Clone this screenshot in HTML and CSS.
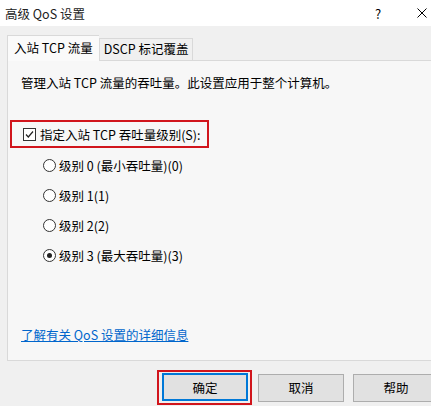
FILE: index.html
```html
<!DOCTYPE html>
<html lang="zh">
<head>
<meta charset="utf-8">
<link rel="stylesheet" href="styles.css">
</head>
<body>
<div class="dialog">
  <div class="titlebar">
    <span class="title">高级 QoS 设置</span>
    <span class="help">?</span>
    <span class="close"><svg width="10" height="10" viewBox="0 0 10 10"><path d="M0.5 0.5L9.5 9.5M9.5 0.5L0.5 9.5" stroke="#000" stroke-width="1" fill="none"/></svg></span>
  </div>
  <div class="body">
    <div class="tabs">
      <div class="tab active">入站 TCP 流量</div>
      <div class="tab second">DSCP 标记覆盖</div>
    </div>
    <div class="panel">
      <p class="desc">管理入站 TCP 流量的吞吐量。此设置应用于整个计算机。</p>
      <div class="checkrow">
        <span class="checkbox"><svg width="11" height="11" viewBox="0 0 11 11"><path d="M2 5.5L4.3 8L9 2.5" stroke="#222" stroke-width="1.2" fill="none"/></svg></span>
        <span>指定入站 TCP 吞吐量级别(S):</span>
      </div>
      <div class="radios">
        <div class="radiorow"><span class="radio"></span><span>级别 0 (最小吞吐量)(0)</span></div>
        <div class="radiorow"><span class="radio"></span><span>级别 1(1)</span></div>
        <div class="radiorow"><span class="radio"></span><span>级别 2(2)</span></div>
        <div class="radiorow"><span class="radio on"></span><span>级别 3 (最大吞吐量)(3)</span></div>
      </div>
      <a class="link" href="#">了解有关 QoS 设置的详细信息</a>
    </div>
    <div class="buttons">
      <div class="focusbox"><button class="btn default">确定</button></div>
      <button class="btn cancel">取消</button>
      <button class="btn helpbtn">帮助</button>
    </div>
  </div>
</div>
</body>
</html>
```
FILE: styles.css
```css
html, body {
  margin: 0;
  padding: 0;
}
body {
  width: 431px;
  height: 406px;
  overflow: hidden;
  background: #f0f0f0;
  font-family: "Noto Sans CJK SC", "Noto Sans", sans-serif;
  font-size: 12.5px;
  color: #000;
}
.dialog {
  width: 431px;
  height: 406px;
  display: flex;
  flex-direction: column;
}
.titlebar {
  height: 26px;
  background: #fff;
  display: flex;
  align-items: center;
  flex-shrink: 0;
}
.title {
  padding-left: 5px;
  flex: 1;
  font-size: 12.5px;
  color: #222;
}
.help {
  width: 8px;
  margin-right: 34px;
  font-size: 13px;
}
.close {
  width: 10px;
  margin-right: 4px;
  display: flex;
}
.body {
  flex: 1;
  display: flex;
  flex-direction: column;
  padding-left: 7px;
}
.tabs {
  display: flex;
  align-items: flex-end;
  margin-top: 8px;
  height: 26px;
  position: relative;
  z-index: 1;
}
.tab {
  height: 21px;
  line-height: 20px;
  padding: 0 6px;
  border: 1px solid #d9d9d9;
  border-bottom: none;
  background: #f0f0f0;
  white-space: nowrap;
}
.tab.second {
  padding: 0 4px;
}
.tab.active {
  height: 25px;
  line-height: 24px;
  background: #fafafa;
  padding: 0 6px 0 6px;
  border-color: #d9d9d9;
  margin-bottom: -1px;
  border-right: none;
}
.panel {
  width: 440px;
  height: 301px;
  box-sizing: border-box;
  border: 1px solid #d9d9d9;
  background: #f7f7f7;
  padding: 12px 13px 0 13px;
  display: flex;
  flex-direction: column;
}
.desc {
  margin: 0;
  height: 20px;
  line-height: 20px;
  white-space: nowrap;
}
.checkrow {
  margin-top: 27px;
  margin-left: -11px;
  width: 199px;
  height: 28px;
  border: 2px solid #d1151c;
  box-sizing: border-box;
  display: flex;
  align-items: center;
  padding-left: 11px;
  gap: 4px;
  white-space: nowrap;
}
.checkbox {
  width: 11px;
  height: 11px;
  border: 1px solid #333;
  display: flex;
  background: #fff;
  flex-shrink: 0;
}
.radios {
  display: flex;
  flex-direction: column;
  margin-top: 2px;
  padding-left: 22px;
}
.radiorow {
  height: 30px;
  display: flex;
  align-items: center;
  gap: 3px;
  white-space: nowrap;
}
.radio {
  width: 11px;
  height: 11px;
  border: 1px solid #333;
  border-radius: 50%;
  background: #fff;
  position: relative;
  flex-shrink: 0;
}
.radio.on::after {
  content: "";
  position: absolute;
  left: 3px;
  top: 3px;
  width: 5px;
  height: 5px;
  border-radius: 50%;
  background: #222;
}
.link {
  margin-top: auto;
  margin-bottom: 16px;
  color: #0066cc;
  text-decoration: underline;
  align-self: flex-start;
  line-height: 18px;
}
.buttons {
  display: flex;
  align-items: center;
  padding-left: 150px;
  margin-top: 9px;
}
.focusbox {
  border: 2px solid #d1151c;
  padding: 1px 2px 2px 3px;
  display: flex;
}
.btn {
  width: 86px;
  height: 28px;
  flex-shrink: 0;
  border: 1px solid #adadad;
  background: #e1e1e1;
  font-family: "Noto Sans CJK SC", "Noto Sans", sans-serif;
  font-size: 12.5px;
  color: #000;
  padding: 0;
}
.btn.default {
  border: 2px solid #0078d7;
}
.cancel {
  margin-left: 6px;
}
.helpbtn {
  margin-left: 9px;
}
```
